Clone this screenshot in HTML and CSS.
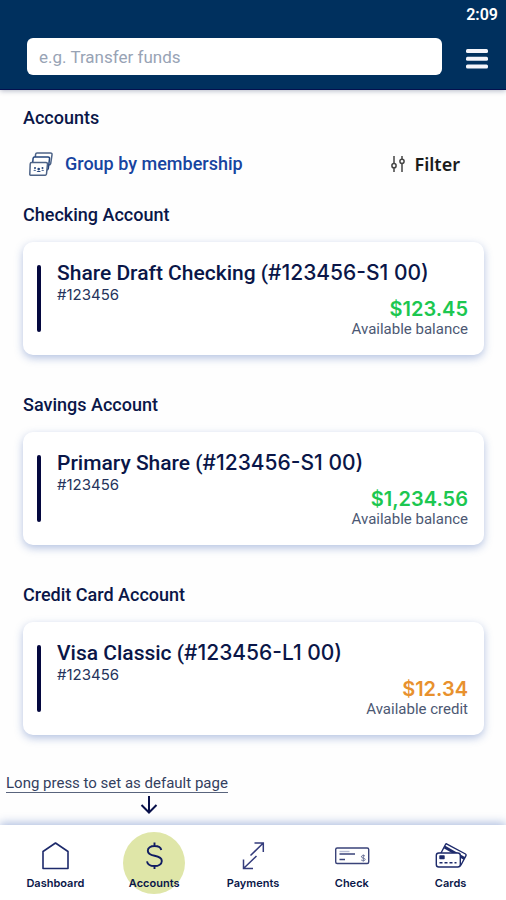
FILE: index.html
```html
<!DOCTYPE html>
<html lang="en">
<head>
<meta charset="utf-8">
<meta name="viewport" content="width=device-width, initial-scale=1">
<title>Accounts</title>
<link rel="stylesheet" href="styles.css">
</head>
<body>
<header class="topbar">
  <time class="clock">2:09</time>
  <div class="topbar-row">
    <input class="search" type="search" placeholder="e.g. Transfer funds" aria-label="Search">
    <button class="menu" type="button" aria-label="Menu">
      <svg width="22" height="20" viewBox="0 0 22 20" fill="#f4f5fb"><rect width="22" height="4" rx="1.500"/><rect y="7.700" width="22" height="4" rx="1.500"/><rect y="15.400" width="22" height="4" rx="1.500"/></svg>
    </button>
  </div>
</header>
<main class="content">
  <h1 class="heading">Accounts</h1>
  <div class="tools">
    <button class="tool group" type="button">
      <svg width="24" height="24" viewBox="0 0 24 24" fill="#fff" stroke="#4d6387" stroke-width="1.500" stroke-linejoin="round">
        <path d="M8 1h13.500q1.800 0 1.500 1.800l-1.300 8.700q-.3 1.500-2 1.500H5.500L6.600 2.300Q6.800 1 8 1Z"/>
        <path d="M5.500 5h13.500q1.800 0 1.500 1.800l-1.200 9.700q-.3 1.500-2 1.500H3L4.100 6.300Q4.300 5 5.500 5Z" stroke="#24457c"/>
        <path d="M2.500 10.500H17q1.500 0 1.500 1.500l-1 10q-.2 1.300-1.700 1.300H2Q.7 23.300.8 22L1.200 12q.1-1.500 1.300-1.500Z"/>
        <g fill="#24457c" stroke="none"><circle cx="6" cy="16" r="1"/><circle cx="13.500" cy="16" r="1"/><circle cx="9.700" cy="17" r="1.300"/><path d="M7.500 20q2.200-2.500 4.500 0ZM4.200 18.700q1.800-2 3 0ZM12.200 18.700q1.600-2 3 0Z"/></g>
      </svg>
      Group by membership
    </button>
    <button class="tool filter" type="button">
      <svg width="14" height="16" viewBox="0 0 14 16" fill="none" stroke="#444" stroke-width="1.500"><path d="M3 0v7.500M3 12v4M11 0v3M11 7.500V16"/><circle cx="3" cy="9.700" r="2.100"/><circle cx="11" cy="5.300" r="2.100"/></svg>
      Filter
    </button>
  </div>

  <section class="section">
    <h2 class="heading">Checking Account</h2>
    <a class="card" href="#checking">
      <h3 class="card-title">Share Draft Checking (<span class="num">#123456-S1 00)</span></h3>
      <p class="member">#123456</p>
      <p class="amount">$123.45</p>
      <p class="caption">Available balance</p>
    </a>
  </section>
  <section class="section">
    <h2 class="heading">Savings Account</h2>
    <a class="card" href="#savings">
      <h3 class="card-title">Primary Share (<span class="num">#123456-S1 00)</span></h3>
      <p class="member">#123456</p>
      <p class="amount">$1,234.56</p>
      <p class="caption">Available balance</p>
    </a>
  </section>
  <section class="section">
    <h2 class="heading">Credit Card Account</h2>
    <a class="card" href="#credit">
      <h3 class="card-title">Visa Classic (<span class="num">#123456-L1 00)</span></h3>
      <p class="member">#123456</p>
      <p class="amount owed">$12.34</p>
      <p class="caption">Available credit</p>
    </a>
  </section>
</main>
<footer class="dock">
  <div class="hint">
    <p class="hint-text">Long press to set as default page</p>
    <svg class="hint-arrow" width="18" height="18" viewBox="0 0 18 18" fill="none" stroke="#08104a" stroke-width="2"><path d="M9 0v16M1.500 9 9 16.500 16.500 9"/></svg>
  </div>
  <nav class="tabs" aria-label="Main">
    <a class="tab" href="#dashboard">
      <svg class="tab-icon" width="36" height="30" viewBox="0 0 36 30" fill="none" stroke="#1d2a6b" stroke-width="1.600" stroke-linejoin="round"><path d="M6 27.500V10.500L18.500 2l12.500 8.500v17Z"/></svg>
      Dashboard
    </a>
    <a class="tab active" href="#accounts" aria-current="page">
      <svg class="tab-icon" width="36" height="30" viewBox="0 0 36 30" fill="none" stroke="#101c62" stroke-width="1.900"><path d="M18.500 1.500v4M18.500 24v4M25.300 9c-.5-2.500-3.200-4-6.700-4-4 0-6.800 1.800-6.800 4.700 0 3.200 3 4.300 6.800 5.100 4.200.9 7.200 2.100 7.200 5.100 0 3.200-3.200 5.100-7.300 5.100-4 0-7-1.800-7.500-4.700"/></svg>
      Accounts
    </a>
    <a class="tab" href="#payments">
      <svg class="tab-icon" width="36" height="30" viewBox="0 0 36 30" fill="none" stroke="#343c7c" stroke-width="1.500"><path d="M19.500 2H28.300V11M28.300 2 15.500 14.500M8.500 18.500v9h9.500M8.500 27.500 21.500 15"/></svg>
      Payments
    </a>
    <a class="tab" href="#check">
      <svg class="tab-icon" width="36" height="30" viewBox="0 0 36 30" fill="none" stroke="#3a4379" stroke-width="1.400"><rect x="1.700" y="7" width="33" height="15.500" rx="1.500"/><path d="M5.500 13H21M5.500 18.500h5.500" stroke-width="1.600"/><path d="M5.500 10.500h10" stroke="#b8bdd5"/><path d="M31 15c-1.500-1.200-3.800-.5-3.600.9.300 1.700 3.700.7 3.800 2.500 0 1.500-2.500 1.800-4 .6M29.300 13.500v7" stroke="#6c7399" stroke-width="1"/></svg>
      Check
    </a>
    <a class="tab" href="#cards">
      <svg class="tab-icon" width="36" height="30" viewBox="0 0 36 30" fill="#fff" stroke="#1d2a6b" stroke-width="1.400" stroke-linejoin="round"><path d="M13.500 2.800 32.500 13q1 .7.500 1.700l-5 9.300q-.5 1-1.600.5L8 14.500Q7 14 7.500 13l5-9.500q.4-.8 1-.7Z"/><path d="m11.500 6 20 11.500" stroke-width="3"/><rect x="3.300" y="12" width="24" height="14" rx="2.500"/><path d="M7 15h4v2.500H7Z" fill="#1d2a6b"/><path d="M6.500 21.800h17" stroke-dasharray="3 2"/></svg>
      Cards
    </a>
  </nav>
</footer>
</body>
</html>
```

FILE: styles.css
```css
* { box-sizing: border-box; }

body {
  margin: 0;
  min-height: 100vh;
  display: flex;
  flex-direction: column;
  background: #fefefe;
  color: #0a1648;
  font-family: Roboto, "Liberation Sans", sans-serif;
}

h1, h2, h3, p { margin: 0; }
a { color: inherit; text-decoration: none; }
button { padding: 0; border: 0; background: none; font: inherit; color: inherit; }
svg { display: block; flex: none; }

.topbar {
  padding: 4px 8px 14px 27px;
  background: #00305e;
  border-bottom: 1px solid #04104f;
  box-shadow: 0 1px 5px rgba(10, 22, 72, .3);
}

.clock {
  display: block;
  height: 34px;
  text-align: right;
  font-size: 16px;
  font-weight: 600;
  line-height: 22px;
  color: #fff;
}

.topbar-row {
  display: flex;
  align-items: center;
  gap: 24px;
  padding-right: 10px;
}

.search {
  flex: 1;
  min-width: 0;
  height: 37px;
  padding: 0 12px;
  border: 0;
  border-radius: 6px;
  background: #fff;
  font: 17px Roboto, sans-serif;
}
.search::placeholder { color: #98a3b5; opacity: 1; }
.menu { padding-top: 5px; }

.content {
  flex: 1;
  padding: 16px 22px 0 23px;
}

.heading {
  font-size: 18px;
  font-weight: 500;
  line-height: 24px;
}

.tools {
  display: flex;
  justify-content: space-between;
  margin: 20px 24px 0 6px;
  height: 27px;
}
.tool { display: flex; align-items: center; font-weight: 500; }
.group { gap: 12px; font-size: 18px; color: #1744a0; }
.filter { gap: 9px; font-size: 18px; font-family: "Noto Sans", sans-serif; font-weight: 600; color: #1b1b1b; }

.section { margin-top: 26px; }
.section + .section { margin-top: 38px; }

.card {
  position: relative;
  display: block;
  margin-top: 15px;
  padding: 18px 16px 17px 34px;
  border-radius: 10px;
  background: #fff;
  box-shadow: 0 3px 8px rgba(50, 90, 175, .36);
}
.card::before {
  content: "";
  position: absolute;
  left: 14px;
  top: 23px;
  bottom: 23px;
  width: 4px;
  border-radius: 2px;
  background: #04083f;
}
.card-title { font-size: 21px; font-weight: 500; line-height: 26px; }
.num { font-family: Inter, sans-serif; font-weight: 500; }
.member { font: 15px/18px Inter, sans-serif; color: #25335c; }
.amount {
  margin-top: -7px;
  text-align: right;
  font: 600 20px/24px Inter, sans-serif;
  color: #1cc750;
}
.owed { color: #e8912d; }
.caption { text-align: right; font-size: 15px; line-height: 17px; color: #4c5873; }

.hint { width: max-content; margin-left: 6px; }
.hint-text {
  border-bottom: 1px solid #59647d;
  font-size: 15px;
  line-height: 18px;
  color: #33405f;
}
.hint-arrow { margin: 3px 0 11px 134px; }

.tabs {
  display: flex;
  height: 75px;
  padding: 0 6px;
  background: #fff;
  box-shadow: 0 -2px 9px rgba(50, 90, 175, .4);
}
.tab {
  position: relative;
  z-index: 0;
  flex: 1;
  display: flex;
  flex-direction: column;
  align-items: center;
  gap: 5px;
  padding-top: 16px;
  font: 600 11px/14px Inter, sans-serif;
}
.active::before {
  content: "";
  position: absolute;
  z-index: -1;
  top: 7px;
  left: 50%;
  width: 62px;
  height: 62px;
  margin-left: -31px;
  border-radius: 50%;
  background: #dfe6a8;
}
```
